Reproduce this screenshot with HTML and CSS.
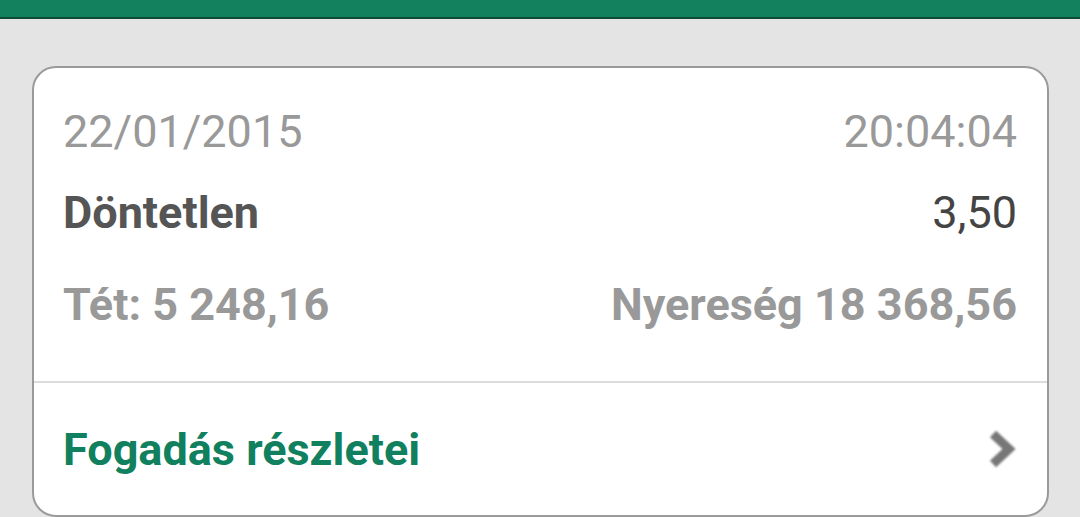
FILE: index.html
```html
<!DOCTYPE html>
<html lang="hu">
<head>
    <meta charset="UTF-8">
    <meta name="viewport" content="width=device-width, initial-scale=1.0">
    <title>Fogadás</title>
    <link rel="stylesheet" href="styles.css">
</head>
<body>

<div class="topbar"></div>

<div class="page">
    <div class="bet-card">
        <div class="bet-info">
            <div class="row muted">
                <span>22/01/2015</span>
                <span>20:04:04</span>
            </div>
            <div class="row outcome">
                <span class="name">Döntetlen</span>
                <span class="odds">3,50</span>
            </div>
            <div class="row amounts">
                <span>Tét: 5 248,16</span>
                <span>Nyereség 18 368,56</span>
            </div>
        </div>
        <div class="bet-link">
            <span>Fogadás részletei</span>
            <svg class="chevron" width="32" height="44" viewBox="0 0 32 44">
                <path d="M8 7 L24 22 L8 37" fill="none" stroke="#777" stroke-width="9" stroke-linejoin="miter"/>
            </svg>
        </div>
    </div>
</div>

</body>
</html>
```

FILE: styles.css
```css
body {
    font-family: Roboto, "Noto Sans", sans-serif;
    margin: 0;
    padding: 0;
    width: 1080px;
    height: 517px;
    overflow: hidden;
    background-color: #e4e4e4;
}

.topbar {
    height: 17px;
    background-color: #13805e;
    border-bottom: 2px solid #0b4d36;
}

.page {
    padding: 47px 31px 0 32px;
}

.bet-card {
    background-color: #fff;
    border: 2px solid #9a9a9a;
    border-radius: 24px;
    height: 447px;
    display: flex;
    flex-direction: column;
}

.bet-info {
    padding: 38px 30px 0 29px;
    height: 275px;
    border-bottom: 2px solid #dcdcdc;
}

.row {
    display: flex;
    justify-content: space-between;
    font-size: 45px;
    line-height: 52px;
}

.muted {
    color: #999;
}

.outcome {
    margin-top: 29px;
}

.outcome .name {
    font-weight: bold;
    color: #555;
}

.outcome .odds {
    color: #444;
}

.amounts {
    margin-top: 40px;
    font-weight: bold;
    color: #999;
}

.bet-link {
    flex: 1;
    display: flex;
    align-items: center;
    justify-content: space-between;
    padding: 0 30px 0 29px;
    font-size: 45px;
    font-weight: bold;
    color: #10805e;
}

.chevron {
    display: block;
    filter: blur(0.8px);
}
```
